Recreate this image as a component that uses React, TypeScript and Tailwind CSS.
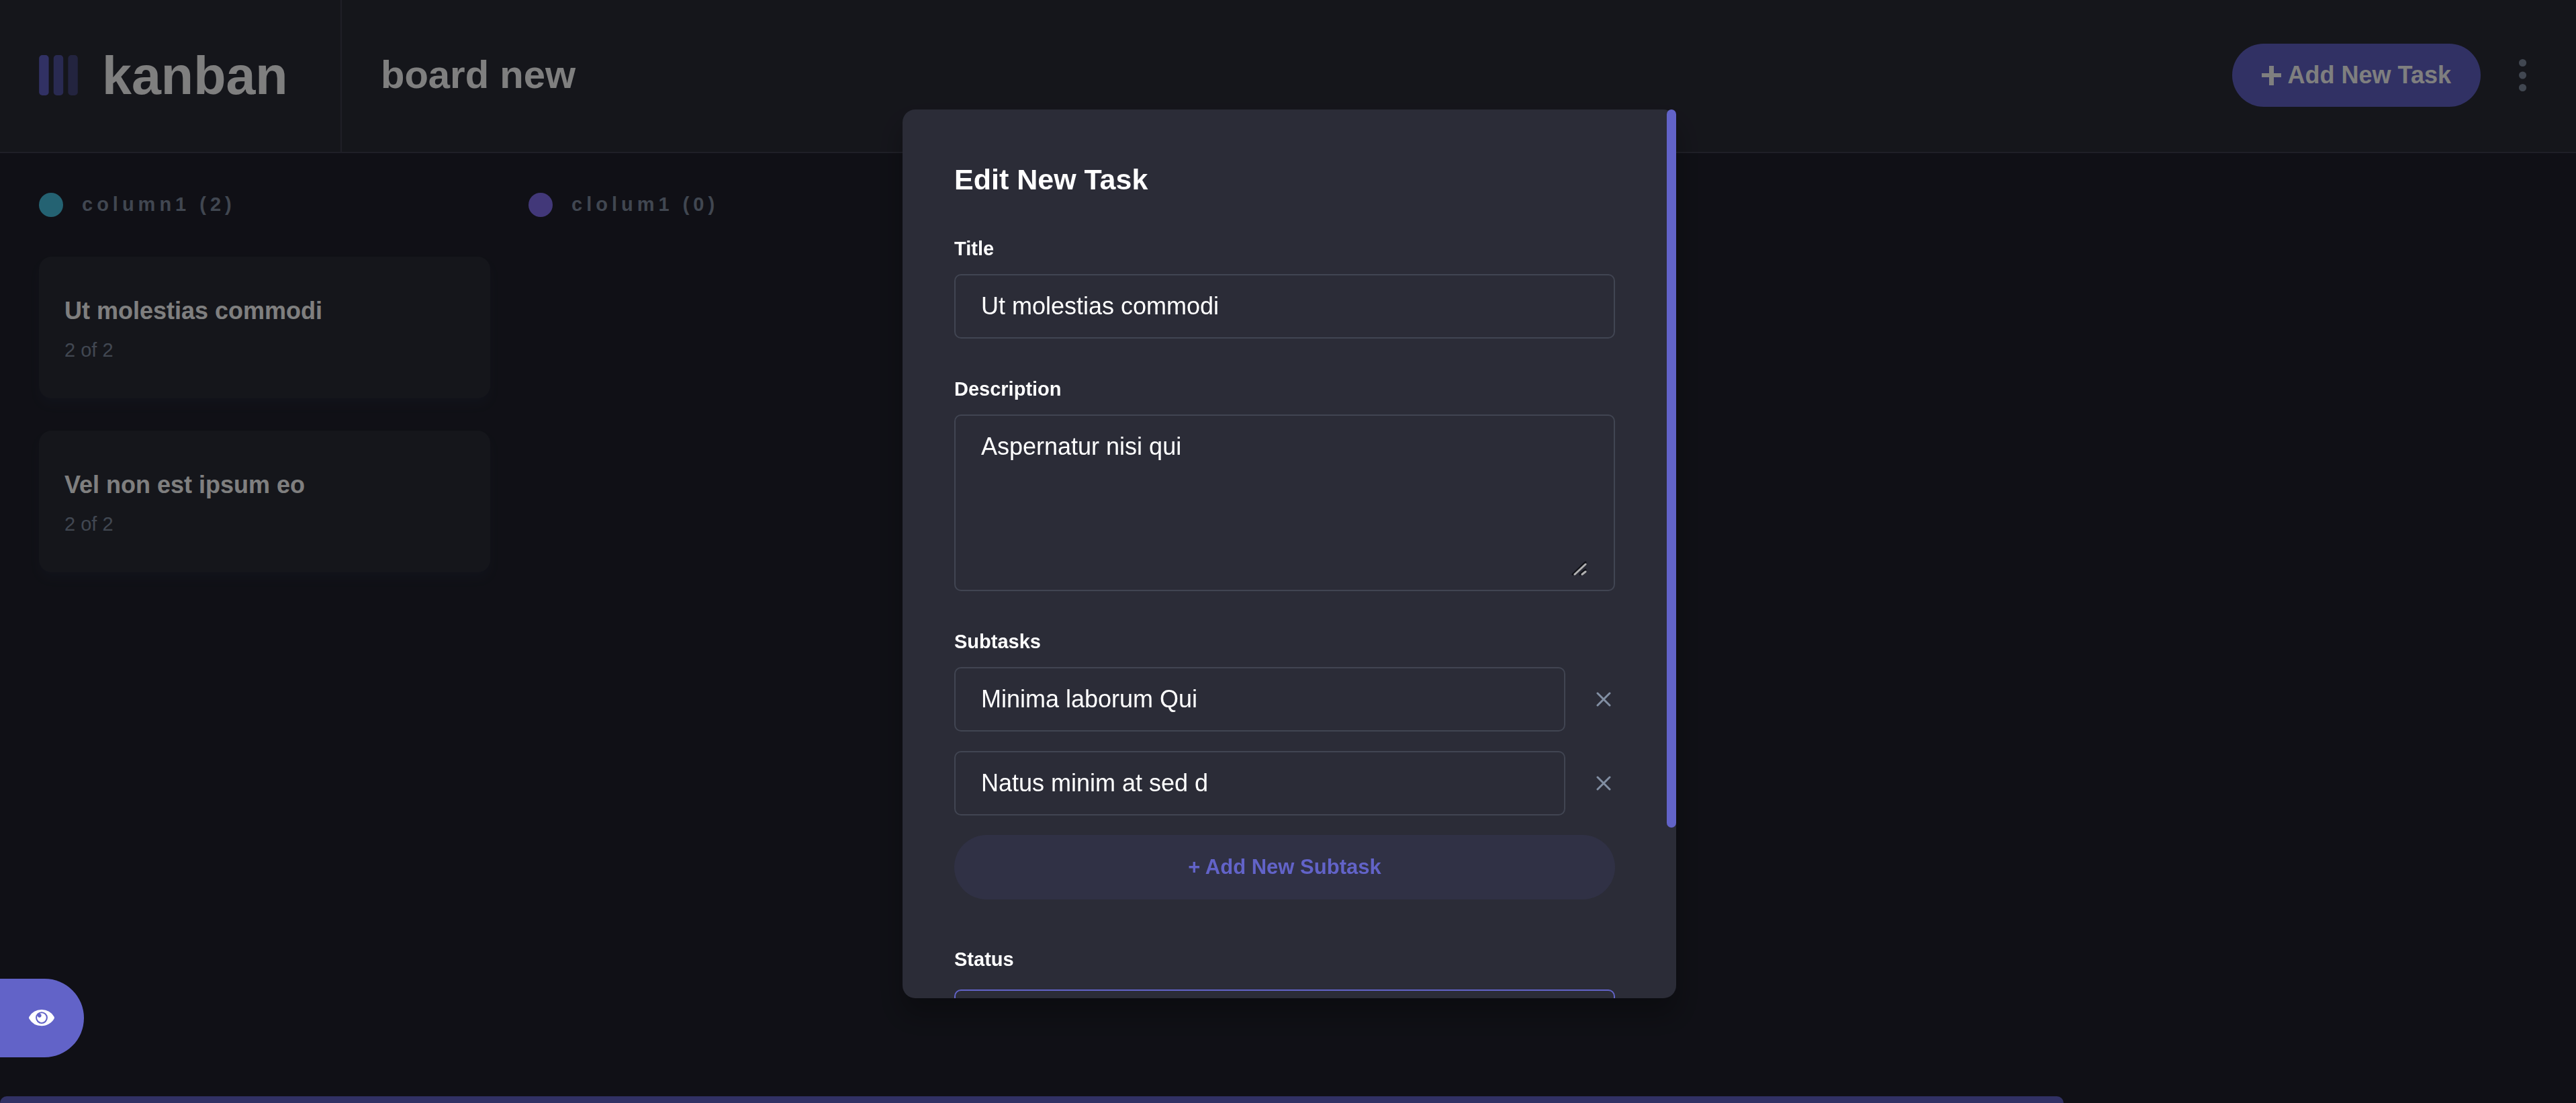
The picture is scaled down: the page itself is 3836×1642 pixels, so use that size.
import React from "react";

type Task = { title: string; done: number; total: number };
type Column = { name: string; dot: string; tasks: Task[] };

const columns: Column[] = [
  {
    name: "column1",
    dot: "bg-[#49c4e5]",
    tasks: [
      { title: "Ut molestias commodi", done: 2, total: 2 },
      { title: "Vel non est ipsum eo", done: 2, total: 2 },
    ],
  },
  { name: "clolum1", dot: "bg-[#8471f2]", tasks: [] },
];

const subtasks = ["Minima laborum Qui", "Natus minim at sed d"];

const fieldClass =
  "h-24 rounded-[10px] border-2 border-[#828fa3]/25 bg-transparent px-[38px] text-[36px] text-white outline-none";
const labelClass = "text-[29px] leading-[36px] font-bold text-white";

function Logo() {
  return (
    <svg className="h-[60px] w-[58px]" viewBox="0 0 24 25" fill="#6263c8" aria-hidden="true">
      <rect width="6" height="25" rx="2" />
      <rect x="9" width="6" height="25" rx="2" opacity=".75" />
      <rect x="18" width="6" height="25" rx="2" opacity=".5" />
    </svg>
  );
}

function Header() {
  return (
    <header className="flex h-[228px] border-b-2 border-[#3e3f4e] bg-[#2b2c37] text-white">
      <div className="flex w-[509px] shrink-0 items-center gap-9 border-r-2 border-[#3e3f4e] pb-[2px] pl-[58px]">
        <Logo />
        <span className="text-[79px] leading-none font-bold">kanban</span>
      </div>
      <div className="flex flex-1 items-center justify-between pr-[73px] pb-[2px] pl-[58px]">
        <h1 className="pb-[2px] text-[58px] leading-none font-bold">board new</h1>
        <div className="flex items-center gap-[57px]">
          <button
            type="button"
            className="flex h-[94px] items-center gap-[10px] rounded-full bg-[#6263c8] px-[44px] text-[36px] font-bold"
          >
            <svg className="size-[29px]" viewBox="0 0 29 29" fill="currentColor" aria-hidden="true">
              <path d="M11 0h7v11h11v6H18v12h-7V17H0v-6h11z" />
            </svg>
            Add New Task
          </button>
          <button type="button" aria-label="Board menu">
            <svg className="h-12 w-[12px]" viewBox="0 0 5 20" fill="#828fa3" aria-hidden="true">
              <circle cx="2.308" cy="2.308" r="2.308" />
              <circle cx="2.308" cy="10" r="2.308" />
              <circle cx="2.308" cy="17.692" r="2.308" />
            </svg>
          </button>
        </div>
      </div>
    </header>
  );
}

function Board() {
  return (
    <main className="flex flex-1 gap-[57px] px-[58px] pt-[55px]">
      {columns.map((column) => (
        <section key={column.name} className="w-[672px] shrink-0">
          <h2 className="flex h-[44px] items-center gap-[28px] text-[29px] font-bold tracking-[6px] text-[#828fa3]">
            <span className={`size-9 rounded-full ${column.dot}`} />
            {column.name} ({column.tasks.length})
          </h2>
          <div className="mt-[55px] flex flex-col gap-12">
            {column.tasks.map((task) => (
              <article
                key={task.title}
                className="rounded-[19px] bg-[#2b2c37] px-[38px] pt-[54px] pb-[50px] shadow-[0_10px_14px_rgba(54,78,126,0.1)]"
              >
                <h3 className="text-[36px] leading-[54px] font-bold text-white">{task.title}</h3>
                <p className="mt-[10px] text-[29px] leading-[43px] text-[#828fa3]">
                  {task.done} of {task.total}
                </p>
              </article>
            ))}
          </div>
        </section>
      ))}
    </main>
  );
}

function EditTaskDialog() {
  return (
    <div
      role="dialog"
      aria-modal="true"
      aria-labelledby="dialog-title"
      className="relative flex max-h-full w-[1152px] rounded-[19px] bg-[#2b2c37] shadow-[0_24px_36px_rgba(0,0,0,0.25)]"
    >
      <form className="flex flex-1 flex-col gap-[57px] overflow-hidden rounded-[19px] py-[77px] pr-[91px] pl-[77px]">
        <h2 id="dialog-title" className="text-[43px] leading-[55px] font-bold text-white">
          Edit New Task
        </h2>

        <div className="flex flex-col gap-5">
          <label htmlFor="title" className={labelClass}>
            Title
          </label>
          <input id="title" className={fieldClass} defaultValue="Ut molestias commodi" />
        </div>

        <div className="flex flex-col gap-5">
          <label htmlFor="description" className={labelClass}>
            Description
          </label>
          <div className="relative flex rounded-[10px] border-2 border-[#828fa3]/25 px-[38px] py-[19px]">
            <textarea
              id="description"
              className="h-[221px] flex-1 resize-none bg-transparent text-[36px] leading-[54px] text-white outline-none"
              defaultValue="Aspernatur nisi qui"
            />
            <svg
              className="absolute right-[40px] bottom-[20px] size-[23px]"
              viewBox="0 0 23 23"
              fill="none"
              strokeWidth="3"
              strokeLinecap="round"
              aria-hidden="true"
            >
              <path d="M2 20L21 2M13 20L21 13" stroke="#0f1016" />
              <path d="M5 20L21 5M16 20L21 16" stroke="#b0b0b0" />
            </svg>
          </div>
        </div>

        <fieldset className="flex min-w-0 flex-col">
          <legend className={`mb-5 ${labelClass}`}>Subtasks</legend>
          <div className="flex flex-col gap-[29px]">
            {subtasks.map((subtask, index) => (
              <div key={subtask} className="flex items-center gap-10">
                <input
                  aria-label={`Subtask ${index + 1}`}
                  className={`min-w-0 flex-1 ${fieldClass}`}
                  defaultValue={subtask}
                />
                <button
                  type="button"
                  aria-label={`Remove subtask ${index + 1}`}
                  className="flex w-[34px] justify-center text-[#828fa3]"
                >
                  <svg
                    className="size-[22px]"
                    viewBox="0 0 22 22"
                    fill="none"
                    stroke="currentColor"
                    strokeWidth="3"
                    strokeLinecap="round"
                    aria-hidden="true"
                  >
                    <path d="M2 2l18 18M20 2L2 20" />
                  </svg>
                </button>
              </div>
            ))}
            <button
              type="button"
              className="h-24 rounded-full bg-[#6263c8]/10 text-[31px] font-bold text-[#6263c8]"
            >
              + Add New Subtask
            </button>
          </div>
        </fieldset>

        <div className="mt-[14px] flex flex-col gap-[27px]">
          <label htmlFor="status" className={labelClass}>
            Status
          </label>
          <select
            id="status"
            className="h-24 shrink-0 appearance-none rounded-[10px] border-2 border-[#6263c8] bg-transparent px-[38px] text-[36px] text-white outline-none"
            defaultValue="column1"
          >
            {columns.map((column) => (
              <option key={column.name}>{column.name}</option>
            ))}
          </select>
        </div>
      </form>
      <div className="absolute top-0 right-0 h-[80.8%] w-[14px] rounded-full bg-[#6263c8]" />
    </div>
  );
}

export default function App() {
  return (
    <div className="flex h-screen flex-col overflow-hidden bg-[#20212c] font-['Liberation_Sans',Arial,sans-serif]">
      <Header />
      <Board />
      <div className="h-[10px] w-[80.1%] rounded-t-[10px] bg-[#6263c8]" />

      <div className="fixed inset-0 flex items-start justify-center bg-black/50 pt-[163px] pb-[156px] pl-[4px]">
        <EditTaskDialog />
      </div>

      <button
        type="button"
        aria-label="Show sidebar"
        className="fixed bottom-[68px] left-0 flex h-[117px] w-[125px] items-center rounded-r-full bg-[#6263c8] pl-[43px]"
      >
        <svg className="h-[26px] w-[38px]" viewBox="0 0 16 11" fill="#fff" aria-hidden="true">
          <path d="M15.815 4.434A9.055 9.055 0 0 0 8 0 9.055 9.055 0 0 0 .185 4.434a1.333 1.333 0 0 0 0 1.354A9.055 9.055 0 0 0 8 10.222c3.33 0 6.25-1.777 7.815-4.434a1.333 1.333 0 0 0 0-1.354ZM8 8.89A3.776 3.776 0 0 1 4.222 5.11 3.776 3.776 0 0 1 8 1.333a3.776 3.776 0 0 1 3.778 3.778A3.776 3.776 0 0 1 8 8.889Zm2.889-3.778a2.889 2.889 0 1 1-5.438-1.36 1.19 1.19 0 1 0 1.19-1.189H6.64a2.889 2.889 0 0 1 4.25 2.549Z" />
        </svg>
      </button>
    </div>
  );
}
